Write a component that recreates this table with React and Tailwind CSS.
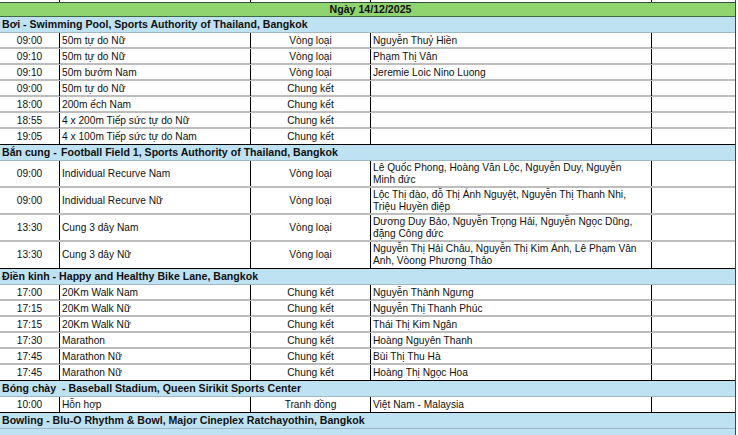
const groups = [
  {
    title: ['Bơi - Swimming Pool, Sports Authority of Thailand, Bangkok'],
    tall: false,
    rows: [
      ['09:00', '50m tự do Nữ', 'Vòng loại', ['Nguyễn Thuỷ Hiền']],
      ['09:10', '50m tự do Nữ', 'Vòng loại', ['Phạm Thị Vân']],
      ['09:10', '50m bướm Nam', 'Vòng loại', ['Jeremie Loic Nino Luong']],
      ['09:00', '50m tự do Nữ', 'Chung kết', []],
      ['18:00', '200m ếch Nam', 'Chung kết', []],
      ['18:55', '4 x 200m Tiếp sức tự do Nữ', 'Chung kết', []],
      ['19:05', '4 x 100m Tiếp sức tự do Nam', 'Chung kết', []],
    ],
  },
  {
    title: ['Bắn cung - ', 'Football Field 1, Sports Authority of Thailand, Bangkok'],
    tall: true,
    rows: [
      ['09:00', 'Individual Recurve Nam', 'Vòng loại', ['Lê Quốc Phong, Hoàng Văn Lộc, Nguyễn Duy, Nguyễn', 'Minh đức']],
      ['09:00', 'Individual Recurve Nữ', 'Vòng loại', ['Lộc Thị đào, đỗ Thị Ánh Nguyệt, Nguyễn Thị Thanh Nhi,', 'Triệu Huyền điệp']],
      ['13:30', 'Cung 3 dây Nam', 'Vòng loại', ['Dương Duy Bảo, Nguyễn Trọng Hải, Nguyễn Ngọc Dũng,', 'đặng Công đức']],
      ['13:30', 'Cung 3 dây Nữ', 'Vòng loại', ['Nguyễn Thị Hải Châu, Nguyễn Thị Kim Ánh, Lê Phạm Vân', 'Anh, Vòong Phương Thảo']],
    ],
  },
  {
    title: ['Điền kinh - Happy and Healthy Bike Lane, Bangkok'],
    tall: false,
    rows: [
      ['17:00', '20Km Walk Nam', 'Chung kết', ['Nguyễn Thành Ngưng']],
      ['17:15', '20Km Walk Nữ', 'Chung kết', ['Nguyễn Thị Thanh Phúc']],
      ['17:15', '20Km Walk Nữ', 'Chung kết', ['Thái Thị Kim Ngân']],
      ['17:30', 'Marathon', 'Chung kết', ['Hoàng Nguyên Thanh']],
      ['17:45', 'Marathon Nữ', 'Chung kết', ['Bùi Thị Thu Hà']],
      ['17:45', 'Marathon Nữ', 'Chung kết', ['Hoàng Thị Ngọc Hoa']],
    ],
  },
  {
    title: ['Bóng chày  - Baseball Stadium, Queen Sirikit Sports Center'],
    tall: false,
    rows: [['10:00', 'Hỗn hợp', 'Tranh đồng', ['Việt Nam - Malaysia']]],
  },
  {
    title: ['Bowling - Blu-O Rhythm & Bowl, Major Cineplex Ratchayothin, Bangkok'],
    tall: false,
    rows: [],
  },
];

function Row({ cells, tall, last }) {
  const h = tall ? 'h-[27px]' : 'h-[16px]';
  const bottom = last ? 'border-b border-black' : 'border-b-2 border-[#bdbdbd]';
  return (
    <div className={`grid grid-cols-[59px_191px_120px_281px_84px] ${h} ${bottom} bg-white`}>
      <div className="flex items-center justify-center">{cells[0]}</div>
      <div className="flex items-center border-l border-black pl-[2px]">{cells[1]}</div>
      <div className="flex items-center justify-center border-l border-black">{cells[2]}</div>
      <div className="flex flex-col justify-center border-l border-black pl-[2px] leading-[12px] whitespace-nowrap">
        {cells[3].map((line) => (
          <div key={line}>{line}</div>
        ))}
      </div>
      <div className="border-l border-black" />
    </div>
  );
}

export default function App() {
  return (
    <div className="w-[738px] h-[435px] overflow-hidden bg-white text-[#111] text-[10.2px]" style={{ fontFamily: '"Liberation Sans", Arial, sans-serif' }}>
      <div className="w-[736px] border-r border-[#444]">
        <div className="grid grid-cols-[59px_191px_120px_281px_84px] h-[3px] border-b border-[#2f4f3a] bg-white">
          <div />
          <div className="border-l border-black" />
          <div className="border-l border-black" />
          <div className="border-l border-black" />
          <div className="border-l border-black" />
        </div>
        <div className="h-[14px] bg-[#8fd46e] border-b border-[#3b6a45] flex items-center justify-center font-bold text-[10.6px] pl-[6px]">
          Ngày 14/12/2025
        </div>
        {groups.map((g) => (
          <div key={g.title.join('')}>
            <div className="h-[16px] bg-[#bfe2f3] border-b border-[#9fb8c6] flex items-center pl-[2px] font-bold text-[10.6px] whitespace-pre">
              {g.title.length > 1 ? (
                <>
                  <span className="w-[59px] shrink-0">{g.title[0]}</span>
                  <span>{g.title[1]}</span>
                </>
              ) : (
                g.title[0]
              )}
            </div>
            {g.rows.map((r, i) => (
              <Row key={i} cells={r} tall={g.tall} last={i === g.rows.length - 1} />
            ))}
          </div>
        ))}
        <div className="h-[8px] bg-[#bfe2f3]" />
      </div>
    </div>
  );
}
